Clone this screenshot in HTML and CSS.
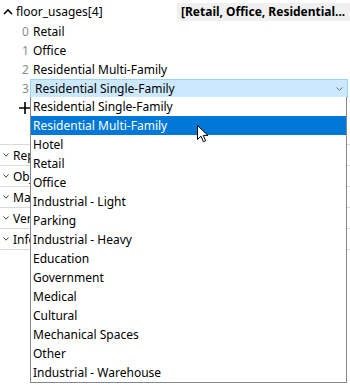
FILE: index.html
```html
<!DOCTYPE html>
<html lang="en">
    <head>
        <meta charset="UTF-8" />
        <meta name="viewport" content="width=device-width, initial-scale=1.0" />
        <title>floor_usages</title>
        <link rel="stylesheet" href="styles.css">
    </head>
    <body>
        <div class="grid">
            <div class="head">
                <div class="name">
                    <svg class="chev-up" width="10" height="7" viewBox="0 0 10 7"><path d="M1 6 L5 2 L9 6" fill="none" stroke="#000" stroke-width="1.6"/></svg>
                    <span>floor_usages[4]</span>
                </div>
                <div class="value">[Retail, Office, Residential...</div>
            </div>

            <div class="item"><span class="idx">0</span><span class="txt">Retail</span></div>
            <div class="item"><span class="idx">1</span><span class="txt">Office</span></div>
            <div class="item"><span class="idx">2</span><span class="txt">Residential Multi-Family</span></div>
            <div class="item">
                <span class="idx">3</span>
                <div class="combo">
                    <span>Residential Single-Family</span>
                    <svg width="7" height="4" viewBox="0 0 7 4"><path d="M0.5 0.5 L3.5 3.3 L6.5 0.5" fill="none" stroke="#6d6d6d" stroke-width="1"/></svg>
                </div>
            </div>
            <div class="add">
                <svg width="12" height="12" viewBox="0 0 12 12"><path d="M6 0 V12 M0 6 H12" stroke="#000" stroke-width="1.6"/></svg>
            </div>

            <!-- section titles are cut by the open popup -->
            <div class="sections">
                <div class="section"><svg width="6" height="4" viewBox="0 0 6 4"><path d="M0.5 0.5 L3 3.2 L5.5 0.5" fill="none" stroke="#444" stroke-width="1"/></svg><span class="title">Representation</span></div>
                <div class="section"><svg width="6" height="4" viewBox="0 0 6 4"><path d="M0.5 0.5 L3 3.2 L5.5 0.5" fill="none" stroke="#444" stroke-width="1"/></svg><span class="title">Object</span></div>
                <div class="section"><svg width="6" height="4" viewBox="0 0 6 4"><path d="M0.5 0.5 L3 3.2 L5.5 0.5" fill="none" stroke="#444" stroke-width="1"/></svg><span class="title">Material</span></div>
                <div class="section"><svg width="6" height="4" viewBox="0 0 6 4"><path d="M0.5 0.5 L3 3.2 L5.5 0.5" fill="none" stroke="#444" stroke-width="1"/></svg><span class="title">Version</span></div>
                <div class="section"><svg width="6" height="4" viewBox="0 0 6 4"><path d="M0.5 0.5 L3 3.2 L5.5 0.5" fill="none" stroke="#444" stroke-width="1"/></svg><span class="title">Information</span></div>
            </div>

            <ul class="dropdown">
                <li>Residential Single-Family</li>
                <li class="hover">Residential Multi-Family</li>
                <li>Hotel</li>
                <li>Retail</li>
                <li>Office</li>
                <li>Industrial - Light</li>
                <li>Parking</li>
                <li>Industrial - Heavy</li>
                <li>Education</li>
                <li>Government</li>
                <li>Medical</li>
                <li>Cultural</li>
                <li>Mechanical Spaces</li>
                <li>Other</li>
                <li>Industrial - Warehouse</li>
            </ul>

            <svg class="cursor" width="12" height="18" viewBox="0 0 12 18"><path d="M0.5 0.5 V14.5 L4 11.2 L6.4 16.8 L8.6 15.8 L6.3 10.4 L11 10.4 Z" fill="#fff" stroke="#000" stroke-width="1"/></svg>
        </div>
    </body>
</html>
```

FILE: styles.css
```css
* {
    margin: 0;
    padding: 0;
    box-sizing: border-box;
}
body {
    background: #fff;
    font-family: "Noto Sans", "Open Sans", sans-serif;
    font-size: 12px;
    color: #000;
}
.grid {
    width: 350px;
    height: 385px;
    position: relative;
    overflow: hidden;
}
.head {
    display: flex;
    height: 22px;
}
.head .name {
    width: 177px;
    display: flex;
    align-items: center;
    padding-left: 3px;
    gap: 3px;
}
.head .value {
    flex: 1;
    margin-top: 3px;
    height: 18px;
    background-color: #f0f0f0;
    font-weight: bold;
    padding-left: 4px;
    line-height: 18px;
    white-space: nowrap;
    overflow: hidden;
}
.item {
    display: flex;
    align-items: center;
    height: 19px;
    padding-left: 22px;
}
.idx {
    width: 8px;
    color: #8c8c8c;
}
.txt {
    padding-left: 3px;
}
.combo {
    flex: 1;
    margin-right: 2px;
    height: 19px;
    display: flex;
    align-items: center;
    justify-content: space-between;
    padding: 0 4px 0 4px;
    background-color: #cce8ff;
    border: 1px solid #99d1ff;
}
.add {
    height: 20px;
    padding-left: 19px;
    display: flex;
    align-items: center;
}
.sections {
    margin-top: 26px;
    border-bottom: 1px solid #dadada;
}
.section {
    height: 21px;
    border-top: 1px solid #dadada;
    display: flex;
    align-items: center;
    gap: 4px;
    padding-left: 3px;
}
.section .title {
    width: 18px;
    overflow: hidden;
    white-space: nowrap;
}
.dropdown {
    list-style: none;
    position: absolute;
    left: 30px;
    top: 97px;
    width: 317px;
    background-color: #fff;
    border: 1px solid #828790;
    border-top: none;
}
.dropdown li {
    height: 19px;
    line-height: 19px;
    padding-left: 2px;
    white-space: nowrap;
}
.dropdown .hover {
    background-color: #0078d7;
    color: #fff;
}
.cursor {
    position: absolute;
    left: 197px;
    top: 125px;
}
```
